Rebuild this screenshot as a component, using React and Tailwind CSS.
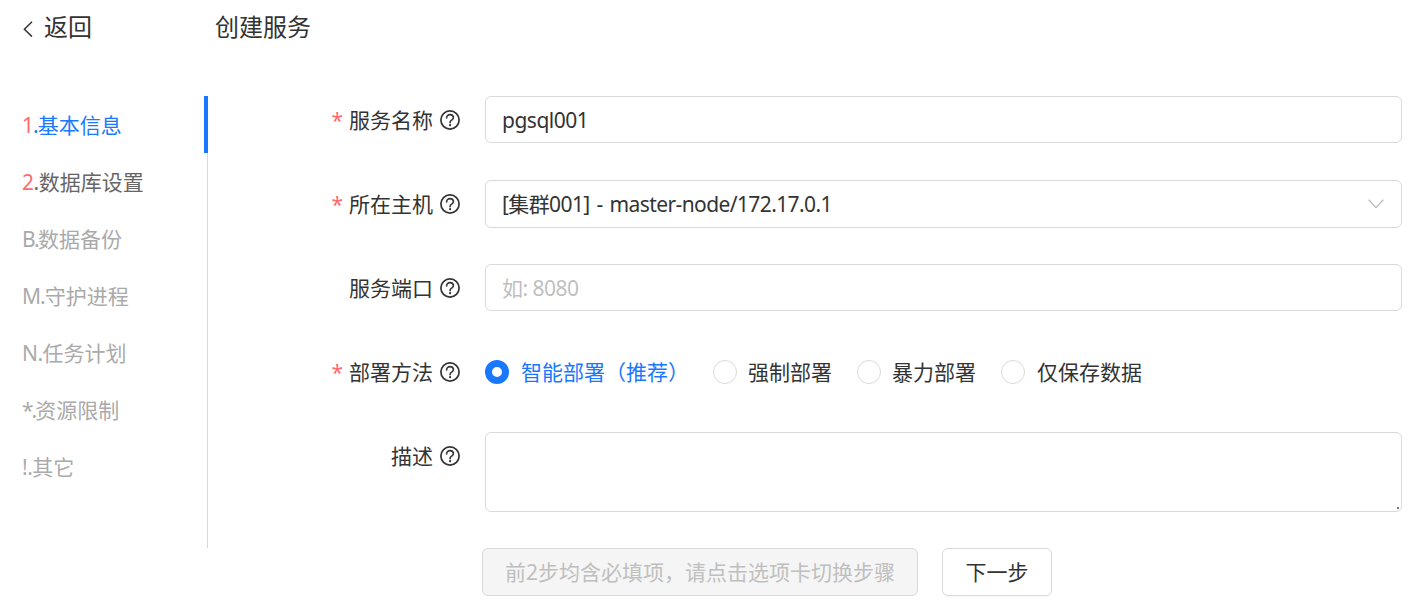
const steps = [
  { no: "1", name: "基本信息", active: true, track: "tracking-[-1px]" },
  { no: "2", name: "数据库设置", track: "tracking-[-0.5px]" },
  { no: "B", name: "数据备份", track: "tracking-[-1.5px]" },
  { no: "M", name: "守护进程", track: "tracking-[-1px]" },
  { no: "N", name: "任务计划", track: "tracking-[-0.5px]" },
  { no: "*", name: "资源限制", track: "tracking-[-2px]" },
  { no: "!", name: "其它", track: "tracking-[-0.5px]" },
];

function Help() {
  return (
    <svg width="20" height="20" viewBox="0 0 20 20" fill="none" className="shrink-0 text-[#333]">
      <circle cx="10" cy="10" r="9.1" stroke="currentColor" strokeWidth="1.7" />
      <path d="M6.6 7.9c0-2 1.5-3.3 3.4-3.3s3.4 1.2 3.4 3c0 1.2-.6 1.9-1.7 2.5-1.1.6-1.6 1.2-1.6 2.2v.5" stroke="currentColor" strokeWidth="1.6" strokeLinecap="round" />
      <circle cx="10.1" cy="15.2" r="1.1" fill="currentColor" />
    </svg>
  );
}

function Label({ text, required }) {
  return (
    <div className="w-[277px] shrink-0 pr-[25px] flex items-center justify-end h-[47px] text-[21px] text-[#333]">
      {required && <span className="text-[#ff6b6b] mr-[6px] pt-[2px] text-[21px] leading-none">*</span>}
      <span className="mr-[7px] pt-[2px]">{text}</span>
      <Help />
    </div>
  );
}

function Radio({ checked, text, width, textGap }) {
  return (
    <div className={`flex items-center ${width}`}>
      {checked ? (
        <span className="w-6 h-6 rounded-full border-[7px] border-[#1a78ff] bg-white shrink-0"></span>
      ) : (
        <span className="w-6 h-6 rounded-full border border-[#d9d9d9] bg-white shrink-0"></span>
      )}
      <span className={`${textGap} pt-[2px] text-[21px] ${checked ? "text-[#1a78ff]" : "text-[#333]"}`}>{text}</span>
    </div>
  );
}

export default function App() {
  return (
    <div className="w-full h-[615px] bg-white overflow-hidden font-['Noto_Sans','Noto_Sans_CJK_SC',sans-serif]">
      <div className="h-[96px] flex items-start pt-[9px] text-[24px] text-[#333]">
        <div className="w-[215px] flex items-center pl-[23px]">
          <svg width="10" height="16" viewBox="0 0 10 16" fill="none" className="mr-[11px] mt-[4px]">
            <path d="M9 .8 1.4 8.3 9 15.6" stroke="#333" strokeWidth="1.5" />
          </svg>
          <span>返回</span>
        </div>
        <span>创建服务</span>
      </div>
      <div className="flex">
        <div className="w-[208px] h-[452px] border-r border-[#d9d9d9] shrink-0">
          {steps.map((s) => (
            <div key={s.no} className={`h-[57px] pl-[22px] pt-[2px] flex items-center text-[21px] relative ${s.active ? "text-[#1a78ff]" : s.no === "2" ? "text-[#666]" : "text-[#aaa]"}`}>
              <span className={s.track}>
                <span className={s.no === "1" || s.no === "2" ? "text-[#ff6b6b]" : ""}>{s.no}</span>.
              </span>
              <span>{s.name}</span>
              {s.active && <span className="absolute -right-px top-0 w-1 h-full bg-[#1a78ff]"></span>}
            </div>
          ))}
        </div>
        <div className="w-[1194px]">
          <div className="flex mb-[37px]">
            <Label text="服务名称" required />
            <div className="flex-1 h-[47px] border border-[#d9d9d9] rounded-md px-[16px] pt-[2px] flex items-center text-[21px] tracking-[-0.5px] text-[#333]">pgsql001</div>
          </div>
          <div className="flex mb-[36px]">
            <Label text="所在主机" required />
            <div className="flex-1 h-[48px] border border-[#d9d9d9] rounded-md pl-[16px] pr-[17px] flex items-center justify-between text-[21px] text-[#333]">
              <span className="pt-[2px] tracking-[-0.6px] [word-spacing:2px]">[集群001] - master-node/172.17.0.1</span>
              <svg width="16" height="10" viewBox="0 0 16 10" fill="none">
                <path d="M.7.8 8 8.6 15.3.8" stroke="#bbb" strokeWidth="1.3" />
              </svg>
            </div>
          </div>
          <div className="flex mb-[37px]">
            <Label text="服务端口" />
            <div className="flex-1 h-[47px] border border-[#d9d9d9] rounded-md px-[16px] pt-[2px] flex items-center text-[21px] tracking-[-0.5px] text-[#bfbfbf]">如: 8080</div>
          </div>
          <div className="flex mb-[37px]">
            <Label text="部署方法" required />
            <div className="flex-1 h-[47px] flex items-center">
              <Radio checked text="智能部署（推荐）" width="w-[228px]" textGap="ml-3" />
              <Radio text="强制部署" width="w-[144px]" textGap="ml-[11px]" />
              <Radio text="暴力部署" width="w-[144px]" textGap="ml-[11px]" />
              <Radio text="仅保存数据" textGap="ml-3" />
            </div>
          </div>
          <div className="flex mb-[36px]">
            <Label text="描述" />
            <div className="flex-1 h-[80px] border border-[#d9d9d9] rounded-md relative">
              <span className="absolute right-[2px] bottom-[2px] w-[2px] h-[2px] bg-[#777]"></span>
            </div>
          </div>
          <div className="flex ml-[274px]">
            <div className="w-[436px] h-[48px] border border-[#d9d9d9] bg-[#f5f5f5] rounded-md pt-[2px] flex items-center justify-center text-[21px] text-[#bfbfbf]">前2步均含必填项，请点击选项卡切换步骤</div>
            <div className="ml-[24px] w-[110px] h-[48px] border border-[#d9d9d9] bg-white rounded-md pt-[2px] flex items-center justify-center text-[21px] text-[#333] shadow-[0_2px_0_rgba(0,0,0,0.02)]">下一步</div>
          </div>
        </div>
      </div>
    </div>
  );
}
